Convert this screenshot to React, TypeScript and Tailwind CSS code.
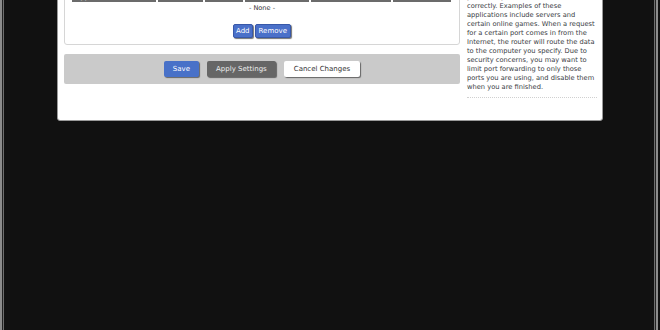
const font = { fontFamily: '"DejaVu Sans", Verdana, sans-serif' };

const helpLines = [
  "applications require that specific",
  "ports be open in order to function",
  "correctly. Examples of these",
  "applications include servers and",
  "certain online games. When a request",
  "for a certain port comes in from the",
  "Internet, the router will route the data",
  "to the computer you specify. Due to",
  "security concerns, you may want to",
  "limit port forwarding to only those",
  "ports you are using, and disable them",
  "when you are finished.",
];

const columns = [
  { label: "Application", w: "w-[84px]" },
  { label: "", w: "w-[45px]" },
  { label: "", w: "w-[38px]" },
  { label: "", w: "w-[64px]" },
  { label: "", w: "w-[80px]" },
  { label: "", w: "w-[58px]" },
];

function FrameEdge({ side }: { side: "left" | "right" }) {
  if (side === "left") {
    return (
      <div className="flex h-full w-[4px] shrink-0">
        <div className="w-[2px] bg-[#8c8c8c]" />
        <div className="w-[1px] bg-[#222]" />
        <div className="w-[1px] bg-[#6e6e6e]" />
      </div>
    );
  }
  return (
    <div className="flex h-full w-[6px] shrink-0">
      <div className="w-[1px] bg-[#6e6e6e]" />
      <div className="w-[1px] bg-[#222]" />
      <div className="w-[2px] bg-[#8c8c8c]" />
      <div className="w-[2px] bg-[#111]" />
    </div>
  );
}

export default function App() {
  return (
    <div className="flex h-[330px] w-[660px] overflow-hidden bg-[#111]" style={font}>
      <FrameEdge side="left" />
      <div className="flex-1 pl-[53px]">
        <div className="-mt-[20px] flex w-[546px] items-start gap-[7px] rounded-b-[3px] border border-[#9a9a9a] bg-white pl-[6px]">
          {/* main column */}
          <div className="w-[396px] shrink-0 pb-[36px]">
            <div className="rounded-[3px] border border-[#d6d6d6] px-[7px] pb-[6px] pt-[4px]">
              <div className="flex gap-[2px]">
                {columns.map((c, i) => (
                  <div
                    key={i}
                    className={`${c.w} flex h-[16px] items-end bg-[#6b6b6b] px-[4px] text-[6.7px] leading-[9px] text-white`}
                  >
                    {c.label}
                  </div>
                ))}
              </div>
              <div className="mt-[2px] text-center text-[6.6px] leading-[9px] text-[#333]">- None -</div>
              <div className="mt-[11px] flex justify-center gap-[2px]">
                <button className="h-[14px] rounded-[2px] border border-[#3858a8] bg-[#4a70c9] px-[2px] text-[7px] leading-[12px] text-white shadow-[1px_1px_1px_rgba(0,0,0,0.55)]">
                  Add
                </button>
                <button className="h-[14px] rounded-[2px] border border-[#3858a8] bg-[#4a70c9] px-[3px] text-[7px] leading-[12px] text-white shadow-[1px_1px_1px_rgba(0,0,0,0.55)]">
                  Remove
                </button>
              </div>
            </div>
            <div className="mt-[9px] flex h-[30px] items-center justify-center gap-[8px] rounded-[2px] bg-[#cacaca]">
              <button className="h-[16px] rounded-[2px] bg-[#4871c8] px-[9px] text-[7px] leading-[16px] text-white shadow-[1px_1px_1px_rgba(0,0,0,0.5)]">
                Save
              </button>
              <button className="h-[16px] rounded-[2px] bg-[#666] px-[9px] text-[7px] leading-[16px] text-[#eee] shadow-[1px_1px_1px_rgba(0,0,0,0.5)]">
                Apply Settings
              </button>
              <button className="h-[16px] rounded-[2px] bg-white px-[10px] text-[7px] leading-[16px] text-[#333] shadow-[1px_1px_1px_rgba(0,0,0,0.5)]">
                Cancel Changes
              </button>
            </div>
          </div>
          {/* help column */}
          <div className="w-[130px] shrink-0 pt-[3px]">
            <div className="whitespace-nowrap text-[6.7px] leading-[9px] text-[#3a3d44]">
              {helpLines.map((l, i) => (
                <div key={i}>{l}</div>
              ))}
            </div>
            <div className="mt-[5px] border-t border-dotted border-[#d0d0d0]" />
          </div>
        </div>
      </div>
      <FrameEdge side="right" />
    </div>
  );
}
